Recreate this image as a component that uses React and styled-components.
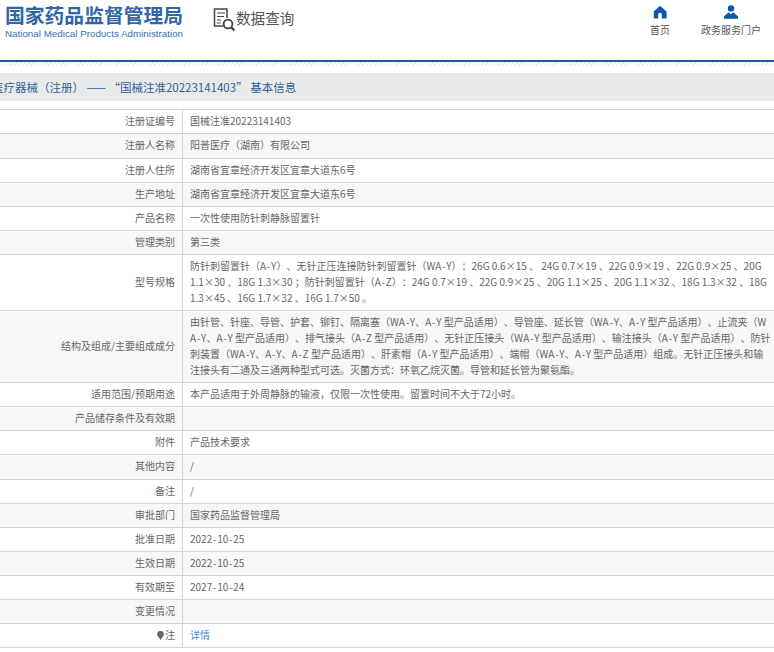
import React from "react";
import styled, { createGlobalStyle } from "styled-components";

const Global = createGlobalStyle`
  html, body { margin: 0; padding: 0; background: #fff; overflow: hidden; }
  body {
    font-family: "Noto Sans CJK SC", "Noto Sans", sans-serif;
    text-spacing-trim: space-all;
  }
`;

const Page = styled.div`
  width: 774px;
  height: 652px;
  overflow: hidden;
`;

const Header = styled.header`
  height: 60px;
  display: flex;
  align-items: flex-start;
  border-bottom: 2px solid #1f5a96;
  box-sizing: content-box;
`;

const Logo = styled.div`
  width: 213px;
  padding: 0 0 0 5px;
  box-sizing: border-box;
`;

const LogoTitle = styled.div`
  font-size: 19.8px;
  font-weight: 700;
  line-height: 24px;
  margin-top: 3px;
  color: #2f66a8;
  white-space: nowrap;
`;

const LogoSub = styled.div`
  font-family: "Liberation Sans", sans-serif;
  font-size: 9.8px;
  line-height: 12px;
  margin-top: 1px;
  color: #3571b5;
  white-space: nowrap;
`;

const Search = styled.div`
  display: flex;
  align-items: center;
  margin-top: 8px;
  font-size: 14.6px;
  line-height: 22px;
  color: #555;
`;

const SearchLabel = styled.span`
  margin-top: -4px;
`;

const Nav = styled.nav`
  margin-left: auto;
  display: flex;
  padding-top: 5px;
`;

const NavItem = styled.div`
  width: ${(p) => p.$w}px;
  display: flex;
  flex-direction: column;
  align-items: center;
  font-size: 10px;
  line-height: 14px;
  color: #555;
  gap: 4px;
`;

const Hatch = styled.div`
  height: 4px;
  background: repeating-linear-gradient(135deg, #e4ecf3 0 1px, #fff 1px 3px);
`;

const Title = styled.div`
  margin-top: 7px;
  height: 28px;
  line-height: 28px;
  background: #eaeaea;
  color: #2f5f96;
  font-size: 11.5px;
  white-space: nowrap;
  overflow: hidden;
  text-indent: -8px;
`;

const Table = styled.div`
  margin-top: 8.4px;
  border-top: 1px solid #d4d4d4;
`;

const Row = styled.div`
  display: grid;
  grid-template-columns: 183px 1fr;
  border-bottom: 1px solid #d4d4d4;
  background: ${(p) => (p.$alt ? "#f7f7f7" : "#fff")};
  font-size: 10px;
  line-height: 16px;
  color: #666;
`;

const Label = styled.div`
  padding: 3px 7px 4.1px 0;
  text-align: right;
  display: flex;
  align-items: center;
  justify-content: flex-end;
  border-right: 1px solid #d4d4d4;
  min-height: 16px;
`;

const Value = styled.div`
  padding: 3px 0 4.1px 7px;
  white-space: pre;
  min-width: 0;
`;

const Hyphen = styled.span`
  padding: 0 0.75px;
`;

const Detail = styled.span`
  color: #3f8ce0;
`;

const rows = [
  ["注册证编号", "国械注准20223141403"],
  ["注册人名称", "阳普医疗（湖南）有限公司"],
  ["注册人住所", "湖南省宜章经济开发区宜章大道东6号"],
  ["生产地址", "湖南省宜章经济开发区宜章大道东6号"],
  ["产品名称", "一次性使用防针刺静脉留置针"],
  ["管理类别", "第三类"],
  ["型号规格", "防针刺留置针（A-Y）、无针正压连接防针刺留置针（WA-Y）：26G 0.6×15 、 24G 0.7×19 、22G 0.9×19 、22G 0.9×25 、20G\n1.1×30 、18G 1.3×30 ；防针刺留置针（A-Z）：24G 0.7×19 、22G 0.9×25 、20G 1.1×25 、20G 1.1×32 、18G 1.3×32 、18G\n1.3×45 、16G 1.7×32 、16G 1.7×50 。"],
  ["结构及组成/主要组成成分", "由针管、针座、导管、护套、铆钉、隔离塞（WA-Y、A-Y 型产品适用）、导管座、延长管（WA-Y、A-Y 型产品适用）、止流夹（W\nA-Y、A-Y 型产品适用）、排气接头（A-Z 型产品适用）、无针正压接头（WA-Y 型产品适用）、输注接头（A-Y 型产品适用）、防针\n刺装置（WA-Y、A-Y、A-Z 型产品适用）、肝素帽（A-Y 型产品适用）、端帽（WA-Y、A-Y 型产品适用）组成。无针正压接头和输\n注接头有二通及三通两种型式可选。灭菌方式：环氧乙烷灭菌。导管和延长管为聚氨酯。"],
  ["适用范围/预期用途", "本产品适用于外周静脉的输液，仅限一次性使用。留置时间不大于72小时。"],
  ["产品储存条件及有效期", ""],
  ["附件", "产品技术要求"],
  ["其他内容", "/"],
  ["备注", "/"],
  ["审批部门", "国家药品监督管理局"],
  ["批准日期", "2022-10-25"],
  ["生效日期", "2022-10-25"],
  ["有效期至", "2027-10-24"],
  ["变更情况", ""],
];

const withHyphens = (text) =>
  text.split("-").map((part, i) => (
    <React.Fragment key={i}>
      {i > 0 && <Hyphen>-</Hyphen>}
      {part}
    </React.Fragment>
  ));

const SearchIcon = () => (
  <svg width="23" height="24" viewBox="0 0 23 24" fill="none" stroke="#444" strokeWidth="1.5">
    <path d="M12 18H1.5V1h12.5v9" />
    <path d="M4 5h8M4 8.5h7M4 12h4M4 15h3.5" strokeWidth="1.2" />
    <circle cx="15" cy="16" r="4.4" strokeWidth="1.8" />
    <path d="M18.2 19.4l3.2 3" strokeWidth="2.2" />
  </svg>
);

const HomeIcon = () => (
  <svg width="14" height="14" viewBox="0 0 14 14" fill="#0f57ad">
    <path fillRule="evenodd" d="M7 .8 13.6 6.6V13.6H.8V6.6ZM5.2 13.6V9.5a1.8 1.8 0 0 1 3.6 0v4.1Z" />
  </svg>
);

const UserIcon = () => (
  <svg width="14" height="14" viewBox="0 0 14 14" fill="#0f57ad">
    <circle cx="7" cy="3.4" r="3.2" />
    <path d="M4.6 7.2 7 9.2l2.4-2L14 11.4v2.4H0v-2.4Z" />
  </svg>
);

const PinSvg = styled.svg`
  margin-right: 1px;
`;

const Pin = () => (
  <PinSvg width="7" height="9" viewBox="0 0 7 9" fill="#666">
    <path d="M3.5 0a3.4 3.4 0 0 1 3.4 3.4C6.9 5.4 4.6 6.4 3.5 9 2.4 6.4.1 5.4.1 3.4A3.4 3.4 0 0 1 3.5 0Z" />
  </PinSvg>
);

export default function App() {
  return (
    <Page>
      <Global />
      <Header>
        <Logo>
          <LogoTitle>国家药品监督管理局</LogoTitle>
          <LogoSub>National Medical Products Administration</LogoSub>
        </Logo>
        <Search>
          <SearchIcon />
          <SearchLabel>数据查询</SearchLabel>
        </Search>
        <Nav>
          <NavItem $w={56}>
            <HomeIcon />
            首页
          </NavItem>
          <NavItem $w={86}>
            <UserIcon />
            政务服务门户
          </NavItem>
        </Nav>
      </Header>
      <Hatch />
      <Title>医疗器械（注册） —— “国械注准20223141403” 基本信息</Title>
      <Table>
        {rows.map(([l, v], i) => (
          <Row key={l} $alt={i % 2 === 1}>
            <Label>{l}</Label>
            <Value>{withHyphens(v)}</Value>
          </Row>
        ))}
        <Row>
          <Label>
            <Pin />注
          </Label>
          <Value>
            <Detail>详情</Detail>
          </Value>
        </Row>
      </Table>
    </Page>
  );
}
